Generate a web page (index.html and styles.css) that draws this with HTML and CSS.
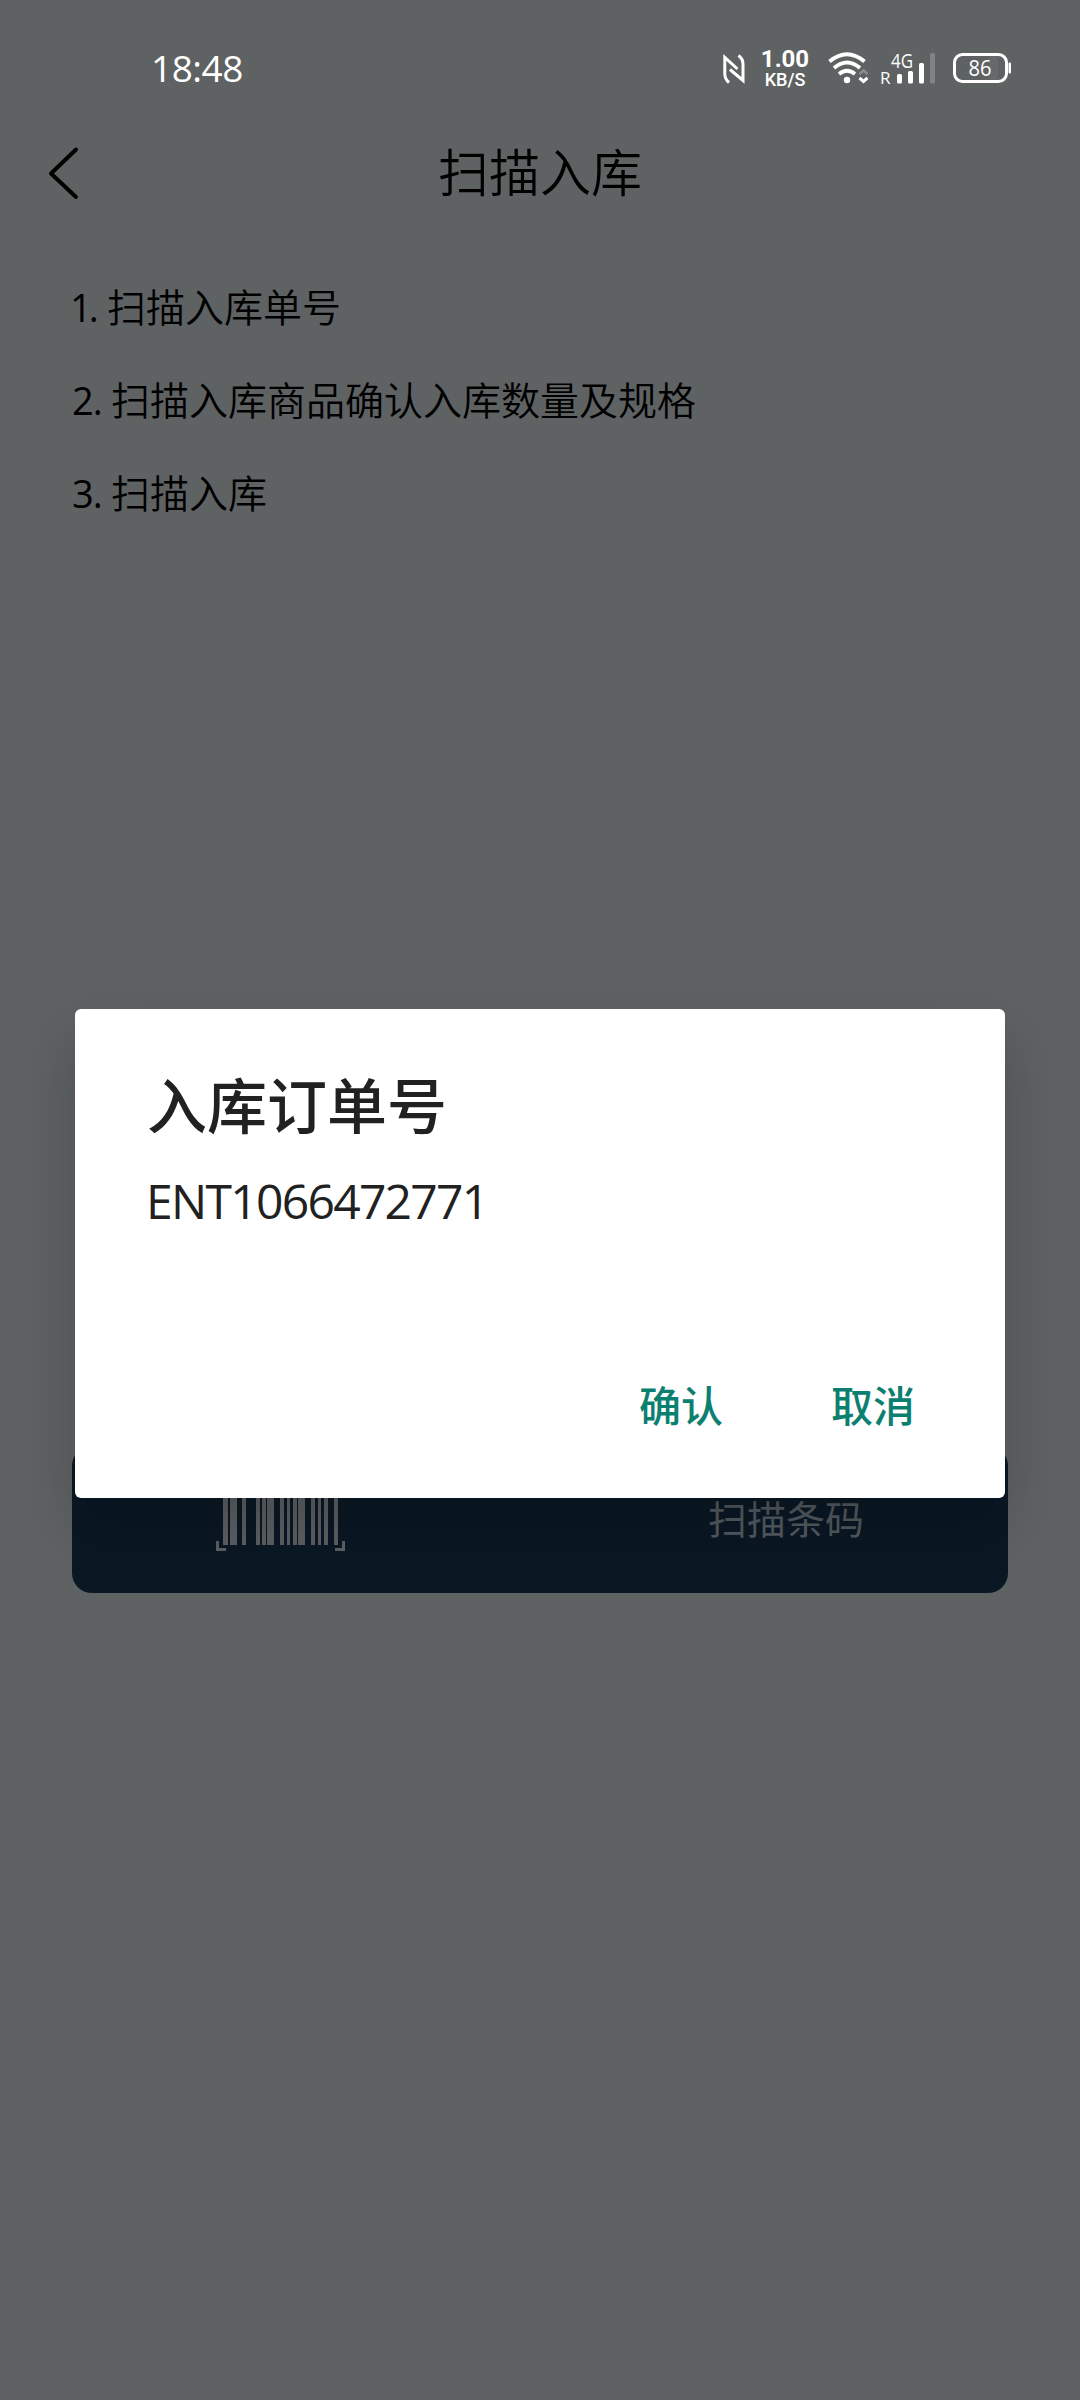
FILE: index.html
```html
<!DOCTYPE html>
<html lang="zh-CN">
  <head>
    <meta charset="utf-8">
    <meta name="viewport" content="width=device-width, initial-scale=1">
    <title>扫描入库</title>
    <link rel="stylesheet" href="styles.css">
  </head>
  <body>
<div class="page">
  <div class="statusBar">
    <span class="time">18:48</span>
    <div class="statusIcons">
      <svg class="nfc" width="22" height="40" viewBox="0 0 22 40" fill="none" stroke="#fff" stroke-width="3">
        <path d="M6 34.5C3 32 1.8 30 1.8 26V9.500L14.500 21"/>
        <path d="M15.500 7.500C18.800 10 20 12 20 16V32.500L7 21.500"/>
      </svg>
      <div class="netSpeed">
        <span class="speedNum">1.00</span>
        <span class="speedUnit">KB/S</span>
      </div>
      <svg class="wifi" width="40" height="40" viewBox="0 0 40 40" fill="none" stroke="#fff" stroke-width="3.800">
        <path d="M1.500 13.500Q19 -1 36.500 13.500"/>
        <path d="M6 20Q19 9 32 20"/>
        <path d="M11 26Q19 19.500 27 26"/>
        <circle cx="19" cy="32" r="3.200" fill="#fff" stroke="none"/>
        <path d="M31.500 26L35.500 22.500L39.500 26" stroke="#8a8d8d" stroke-width="2.500"/>
        <path d="M31.500 30L35.500 33.500L39.500 30" stroke-width="3"/>
      </svg>
      <svg class="signal" width="56" height="40" viewBox="0 0 56 40" fill="#fff">
        <text class="signalNet" x="11" y="20" textLength="22" lengthAdjust="spacingAndGlyphs">4G</text>
        <text class="signalRoam" x="0" y="35.500">R</text>
        <rect x="17" y="26" width="5" height="9.500" rx="1.500"/>
        <rect x="28" y="23" width="5" height="12.500" rx="1.500"/>
        <rect x="39" y="15" width="5" height="20.500" rx="1.500"/>
        <rect x="50" y="5" width="5" height="30.500" rx="1.500" fill="#808383"/>
      </svg>
      <svg class="battery" width="59" height="40" viewBox="0 0 59 40" fill="#fff">
        <rect x="36" y="8" width="9" height="25" fill="#666969"/>
        <rect x="1.500" y="6.500" width="52" height="27" rx="8" fill="none" stroke="#fff" stroke-width="3"/>
        <rect x="55.500" y="14.500" width="2.500" height="11" rx="1"/>
        <text class="batteryNum" x="15.500" y="27.500" textLength="23" lengthAdjust="spacingAndGlyphs">86</text>
      </svg>
    </div>
  </div>

  <div class="navBar">
    <svg class="back" width="32" height="56" viewBox="0 0 32 56" fill="none" stroke="#000" stroke-width="4" stroke-linecap="round" stroke-linejoin="round">
      <path d="M28 4.500L3 28.500L28 52"/>
    </svg>
    <h1>扫描入库</h1>
  </div>

  <ol class="steps">
    <li><span class="num one">1.</span>扫描入库单号</li>
    <li><span class="num">2.</span>扫描入库商品确认入库数量及规格</li>
    <li><span class="num">3.</span>扫描入库</li>
  </ol>

  <div class="scanButton">
    <svg class="barcode" width="129" height="64" viewBox="0 0 129 64" fill="#5d6063">
      <path d="M7 6h5v52H7zM14 6h7v52h-7zM26 6h4v52h-4zM40 6h4v52h-4zM46 6h4v52h-4zM51 6h7v52h-7zM64 6h4v52h-4zM71 6h3v52h-3zM77 6h4v52h-4zM82 6h7v52h-7zM95 6h4v52h-4zM102 6h3v52h-3zM108 6h4v52h-4zM118 6h4v52h-4z"/>
      <path d="M1.500 10V1.500H10M119 1.500H127.500V10M127.500 54V62.500H119M10 62.500H1.500V54" fill="none" stroke="#5d6063" stroke-width="3"/>
    </svg>
    <span>扫描条码</span>
  </div>

  <div class="dialog">
    <h2>入库订单号</h2>
    <p>ENT1066472771</p>
    <div class="dialogButtons">
      <button>确认</button>
      <button>取消</button>
    </div>
  </div>
</div>
  </body>
</html>
```
FILE: styles.css
```css
* {
  box-sizing: border-box;
  margin: 0px;
  padding: 0px;
}
:root {
  --pageBG: #5f6263;
  --cardBG: #0a1824;
  --accent: #0c8070;
}
body {
  background-color: var(--pageBG);
  font-family: 'Open Sans', 'Noto Sans CJK SC', sans-serif;
  color: #000;
}
.page {
  position: relative;
  height: 2400px;
  overflow: hidden;
}
.statusBar {
  display: flex;
  justify-content: space-between;
  height: 136px;
  padding: 48px 68px 0px 151px;
}
.time {
  font-size: 37px;
  line-height: 40px;
  letter-spacing: -0.5px;
  color: white;
}
.statusIcons {
  display: flex;
  height: 40px;
}
.netSpeed {
  display: flex;
  flex-direction: column;
  align-items: center;
  gap: 1px;
  width: 48px;
  margin-left: 16px;
  color: white;
  font-family: Roboto, sans-serif;
  font-weight: bold;
  white-space: nowrap;
}
.speedNum {
  font-size: 24px;
  line-height: 22px;
}
.speedUnit {
  font-size: 18px;
  line-height: 18px;
  font-weight: 500;
}
.wifi {
  margin-left: 19px;
}
.signal {
  margin-left: 12px;
  overflow: visible;
}
.signalNet {
  font-size: 20px;
}
.signalRoam {
  font-size: 17px;
}
.battery {
  margin-left: 17px;
}
.batteryNum {
  font-size: 22px;
}
.navBar {
  display: grid;
  grid-template-columns: 48px 1fr 48px;
  align-items: center;
  height: 74px;
  padding: 0px 48px;
}
h1 {
  font-size: 51px;
  font-weight: 350;
  line-height: 72px;
  padding-bottom: 2px;
  text-align: center;
}
.steps {
  height: 1236px;
  padding: 50px 72px 0px;
  list-style: none;
}
.steps li {
  height: 93px;
  font-size: 39px;
  font-weight: 350;
  line-height: 93px;
}
.num {
  display: inline-block;
  width: 39px;
  font-size: 38px;
  font-weight: 400;
  line-height: 1;
  letter-spacing: -1px;
}
.num.one {
  width: 35px;
  letter-spacing: -3px;
  text-indent: -2px;
}
.scanButton {
  display: flex;
  justify-content: space-between;
  align-items: center;
  height: 147px;
  margin: 0px 72px;
  padding: 0px 144px 2px 144px;
  border-radius: 20px;
  background-color: var(--cardBG);
  color: #525a60;
  font-size: 39px;
}
.scanButton span {
  padding-bottom: 4px;
}
.dialog {
  position: absolute;
  top: 1009px;
  left: 75px;
  width: 930px;
  height: 489px;
  padding: 53px 72px 0px 72px;
  border-radius: 6px;
  background-color: white;
  box-shadow: 0px 28px 60px 0px rgba(0, 0, 0, 0.2);
  color: #212121;
}
h2 {
  font-size: 60px;
  font-weight: 500;
  line-height: 88px;
}
.dialog p {
  margin-top: 13px;
  font-size: 48px;
  font-weight: 400;
  line-height: 76px;
  letter-spacing: -1.7px;
  text-indent: -1px;
}
.dialogButtons {
  display: flex;
  justify-content: flex-end;
  gap: 108px;
  margin-top: 129px;
  padding-right: 18px;
}
button {
  border: none;
  background: none;
  color: var(--accent);
  font-family: inherit;
  font-size: 42px;
  font-weight: 500;
  line-height: 76px;
  cursor: pointer;
}
```
